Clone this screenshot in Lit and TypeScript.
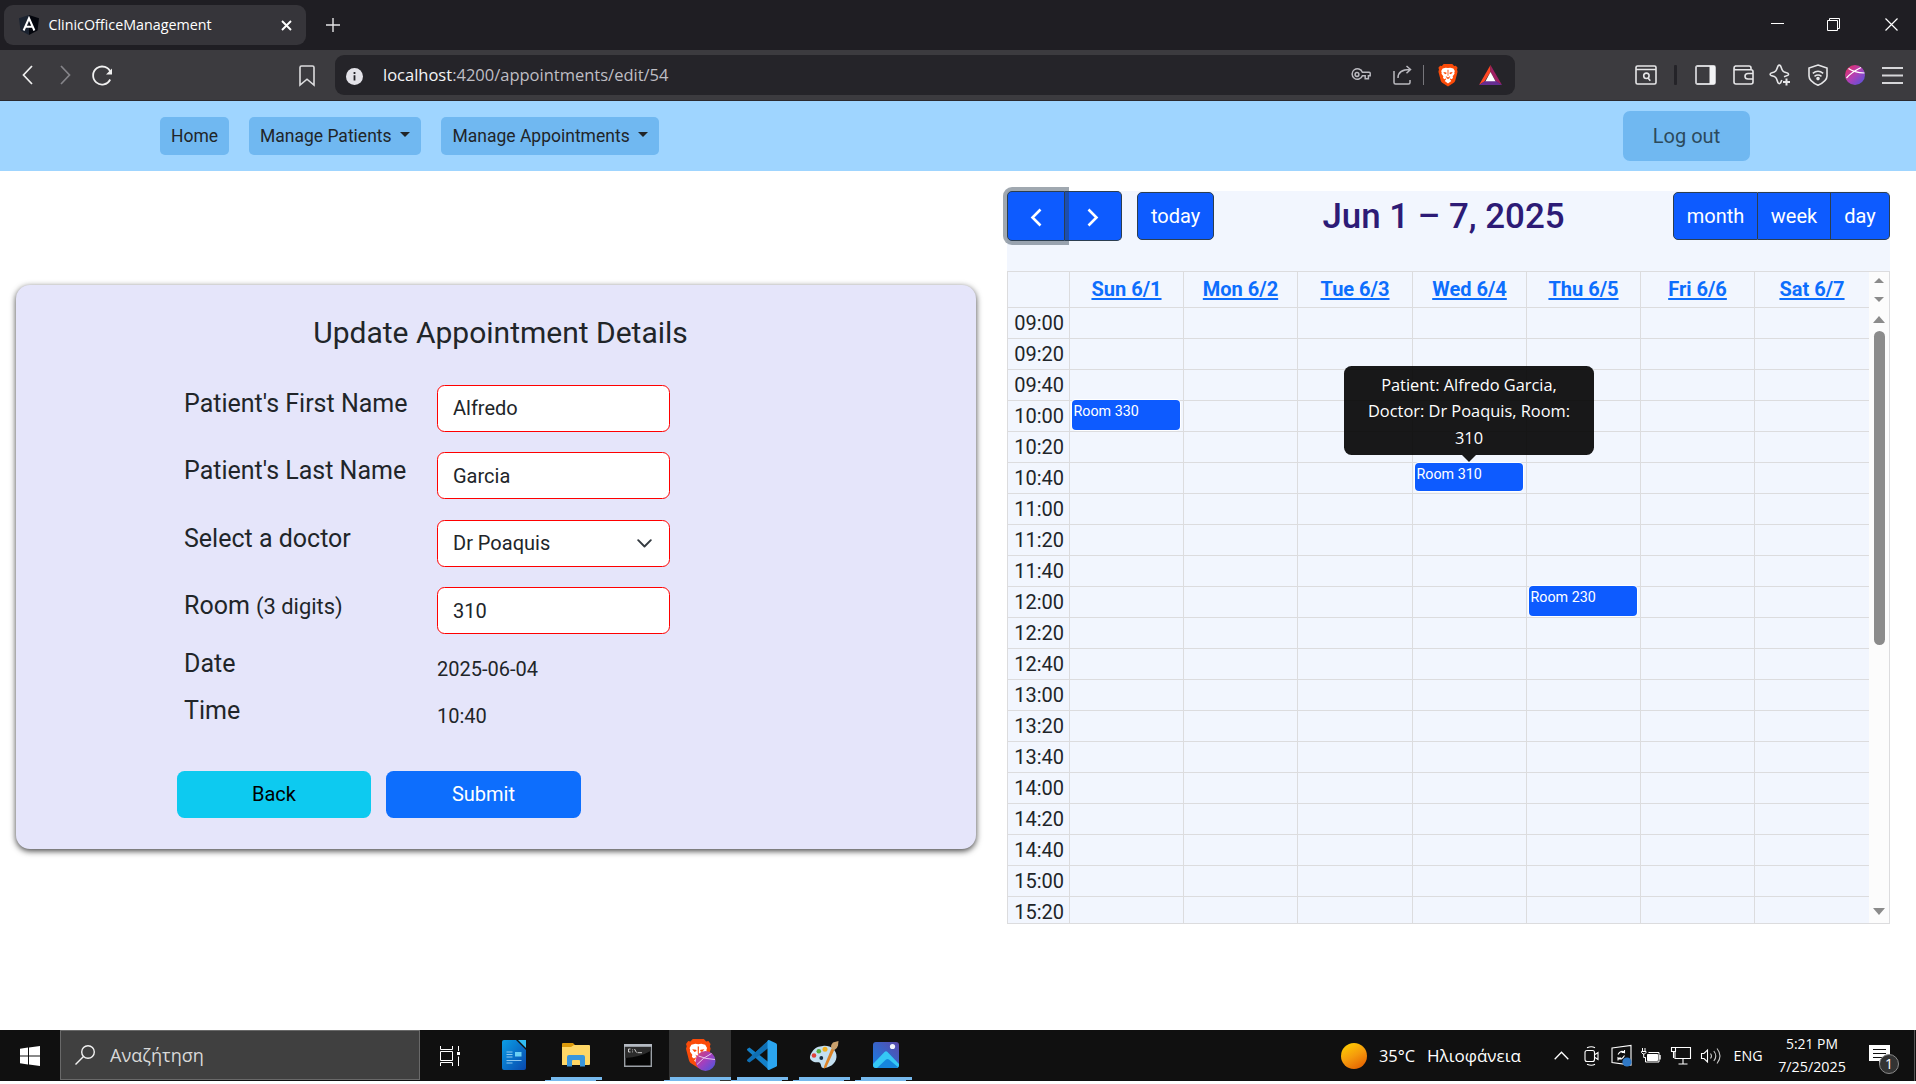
import { LitElement, html, css, svg } from "lit";
import { customElement } from "lit/decorators.js";
import { classMap } from "lit/directives/class-map.js";

const DAYS = ["Sun 6/1", "Mon 6/2", "Tue 6/3", "Wed 6/4", "Thu 6/5", "Fri 6/6", "Sat 6/7"];

const SLOTS = Array.from({ length: 20 }, (_, i) => {
  const minutes = 9 * 60 + i * 20;
  return `${String(Math.floor(minutes / 60)).padStart(2, "0")}:${String(minutes % 60).padStart(2, "0")}`;
});

interface Booking {
  day: number;
  slot: string;
  room: string;
  tip?: string;
}

const BOOKINGS: Booking[] = [
  { day: 0, slot: "10:00", room: "Room 330" },
  { day: 3, slot: "10:40", room: "Room 310", tip: "Patient: Alfredo Garcia, Doctor: Dr Poaquis, Room: 310" },
  { day: 4, slot: "12:00", room: "Room 230" },
];

const lion = svg`
  <path fill="#fb4b09" d="M5.5 0h9l1.9 2 1.8-.3 1.8 2.3-.6 1.8.6 2.2-2.4 9.2c-.4 1.3-1 2-2 2.7L10 23.6l-5.600-3.700c-1-.7-1.600-1.400-2-2.700L0 8l.6-2.200L0 4l1.800-2.300 1.800.3z"/>
  <path fill="#fff" d="M10 4.300l2.400-.5 3.200.9 1.500 2.600-.5 1.600.2 1.300-1.900 2.600.3 1.900-1.600 1.100-1.700-1 .3 1.500 1.200 1.400-3.400 2.700-3.400-2.700 1.200-1.400.3-1.500-1.700 1-1.600-1.100.3-1.900-1.900-2.600.2-1.300-.5-1.600 1.500-2.600 3.200-.9z"/>
  <path fill="#fb4b09" d="M5 8.300l3.200.5.400 1-1.700.8zM15 8.300l-3.200.5-.4 1 1.700.8zM9.500 6h1l-.1 6.200h-.8zM7.500 12.600l2.500 1.600 2.500-1.600-1.500 2.700H9z"/>`;

@customElement("browser-chrome")
class BrowserChrome extends LitElement {
  static styles = css`
    :host { display: block; font-family: "Open Sans", sans-serif; }
    svg { display: block; flex: none; overflow: visible; }
    .strip { display: flex; height: 45px; padding: 5px 0 0 4px; box-sizing: content-box; background: #1f1e23; color: #fff; }
    .tab { display: flex; align-items: center; width: 302px; height: 40px; padding-left: 15px; box-sizing: border-box; border-radius: 9px; background: #36353a; }
    .tab .name { margin-left: 9.500px; width: 232.500px; font-size: 14.3px; line-height: 20px; }
    .plus { margin: 13px 0 0 20px; }
    .window { display: flex; align-items: flex-start; gap: 44px; margin: 13px 18px 0 auto; }
    .bar { display: flex; align-items: center; height: 50px; border-bottom: 1px solid #2b2a2e; background: #3c3b3f; }
    .back { margin-left: 22px; }
    .fwd { margin-left: 27px; }
    .reload { margin-left: 21px; }
    .mark { margin-left: 186px; }
    .url { display: flex; align-items: center; width: 1180px; height: 40px; margin-left: 20px; padding: 0 4px 0 11px; box-sizing: border-box; border-radius: 9px; background: #252429; }
    .address { flex: 1; margin-left: 20px; font-size: 16.5px; line-height: 24px; color: #bfbec4; }
    .address b { font-weight: 400; color: #f4f4f6; }
    .cell { display: flex; justify-content: center; width: 42px; }
    .rule { width: 1px; height: 20px; margin: 0 3px 0 -1px; background: #77767b; }
    .tools { display: flex; align-items: center; margin-left: auto; padding-right: 5px; }
    .tool { display: flex; justify-content: center; width: 37.3px; }
    .sep { width: 3px; height: 20px; margin: 0 10px; border-radius: 1px; background: #242328; }
    .info { margin-top: 2px; }
  `;
  render() {
    return html`
      <div class="strip">
        <div class="tab">
          <svg width="20" height="20" viewBox="0 0 20 20"><path fill="#1b2330" d="M10 0L0 3.300l1.500 12.300L10 20z"/><path fill="#04060d" d="M10 0l10 3.300-1.500 12.300L10 20z"/><path fill="none" stroke="#fff" stroke-width="2" d="M4.600 15.500L10 3.300l5.400 12.200M6.600 11.800h6.800"/></svg>
          <span class="name">ClinicOfficeManagement</span>
          <svg width="11" height="11" viewBox="0 0 11 11"><path d="M1 1l9 9M10 1l-9 9" stroke="#fff" stroke-width="1.900"/></svg>
        </div>
        <svg class="plus" width="14" height="14" viewBox="0 0 14 14"><path d="M7 0v14M0 7h14" stroke="#e4e4e6" stroke-width="1.400"/></svg>
        <div class="window">
          <svg width="13" height="13" viewBox="0 0 13 13"><path d="M0 5.500h13" stroke="#fff"/></svg>
          <svg width="13" height="13" viewBox="0 0 13 13"><path d="M-.5 2.500h10v10h-10zM1.500 2.500v-2h10v10h-2" fill="none" stroke="#fff"/></svg>
          <svg width="13" height="13" viewBox="0 0 13 13"><path d="M.5.500l12 12M12.500.500l-12 12" stroke="#fff" stroke-width="1.200"/></svg>
        </div>
      </div>
      <div class="bar">
        <svg class="back" width="11" height="20" viewBox="0 0 11 20"><path d="M10 1L1.500 10 10 19" fill="none" stroke="#f0f0f0" stroke-width="1.700"/></svg>
        <svg class="fwd" width="11" height="20" viewBox="0 0 11 20"><path d="M1 1l8.500 9L1 19" fill="none" stroke="#858489" stroke-width="1.700"/></svg>
        <svg class="reload" width="21" height="20" viewBox="0 0 21 20"><path d="M18.600 7.500A9 9 0 1 0 18.200 14.500" fill="none" stroke="#f0f0f0" stroke-width="1.800"/><path d="M20 3.500v6h-6z" fill="#f0f0f0"/></svg>
        <svg class="mark" width="16" height="21" viewBox="0 0 16 21"><path d="M1 2.500Q1 1 2.500 1h11Q15 1 15 2.500V20l-7-5.800L1 20z" fill="none" stroke="#dcdcde" stroke-width="1.600"/></svg>
        <div class="url">
          <svg class="info" width="17" height="17" viewBox="0 0 17 17"><circle cx="8.500" cy="8.500" r="8.500" fill="#e3e2e8"/><path d="M8.500 7.300v5.200M8.500 4v1.900" stroke="#252429" stroke-width="1.800"/></svg>
          <span class="address"><b>localhost</b>:4200/appointments/edit/54</span>
          <div class="cell"><svg width="20" height="14" viewBox="0 0 20 14" fill="none" stroke="#bab9bf" stroke-width="1.500"><path d="M11.400 4.200h6.800q1 0 1 1v2.600h-1.800v3h-3.200v-3h-2.800A5.300 5.300 0 1 1 11.400 4.200z"/><circle cx="6" cy="6.500" r="1.900"/></svg></div>
          <div class="cell"><svg width="20" height="20" viewBox="0 0 20 20" fill="none" stroke="#bab9bf" stroke-width="1.500"><path d="M1 6v11.500q0 1.500 1.500 1.500h13q1.500 0 1.500-1.500V15M5 13c0-6 4-8.500 12-8.500M13.500 1l4 3.500-4 3.700"/></svg></div>
          <span class="rule"></span>
          <div class="cell"><svg width="20" height="23" viewBox="0 0 20 24">${lion}</svg></div>
          <div class="cell"><svg width="23" height="20" viewBox="0 0 23 20"><path fill="#ff4724" d="M11.500 0v7L5.500 16.500 0 20z"/><path fill="#9e1f63" d="M11.500 0L23 20l-6-3.500-5.500-9.500z"/><path fill="#662d91" d="M0 20l6-4h11l6 4z"/><path fill="#fff" d="M11.500 7l5 9.200h-10z"/></svg></div>
        </div>
        <div class="tools">
          <div class="tool"><svg width="22" height="20" viewBox="0 0 22 20" fill="none" stroke="#e6e6e8" stroke-width="1.600"><rect x="1" y="1" width="20" height="18" rx="1.500"/><path d="M1 4.500h20M13 13l2.300 2.800"/><circle cx="11.400" cy="10.800" r="2.700"/></svg></div>
          <span class="sep"></span>
          <div class="tool"><svg width="21" height="20" viewBox="0 0 21 20"><rect x="1" y="1" width="19" height="18" rx="1.500" fill="none" stroke="#d2d2d5" stroke-width="1.800"/><path d="M14.500 1h5.500v18h-5.500z" fill="#f3f3f5"/></svg></div>
          <div class="tool"><svg width="21" height="20" viewBox="0 0 21 20" fill="none" stroke="#e6e6e8" stroke-width="1.600"><path d="M1 3V17q0 2 2 2h15q2 0 2-2V6.500q0-1.800-2-1.800H2.500Q1 4.500 1 3t1.500-2H16q2 0 2 2v1.500M20 8.500h-5Q12 8.500 12 11.200t3 2.800h5"/></svg></div>
          <div class="tool"><svg width="22" height="22" viewBox="0 0 22 22" fill="none" stroke="#e6e6e8" stroke-width="1.600"><path d="M12.800 16L11.600 18.800q-1.300 1.600-2.600 0L7.600 15Q7 13.300 5.300 12.600L2 11.400q-1.800-1 0-2.300L5.300 8Q7 7.300 7.600 5.500L9 2q1.300-1.800 2.600 0L13 5.500q.6 1.800 2.300 2.500l3.400 1.100q1.700 1.300 0 2.300L15 12.800"/><path d="M17.500 14.500v7M14 18h7" stroke-width="2"/></svg></div>
          <div class="tool"><svg width="20" height="22" viewBox="0 0 20 22" fill="none" stroke="#e6e6e8" stroke-width="1.600"><path d="M10 1l9 3v8c0 4.500-4 7-9 9.200C5 19 1 16.500 1 12V4z"/><path d="M4.800 9.300q5.200-4 10.400 0M6.500 12.300q3.500-2.600 7 0"/><circle cx="10" cy="14.600" r="1" fill="#e6e6e8"/></svg></div>
          <div class="tool"><svg width="20" height="20" viewBox="0 0 20 20"><defs><linearGradient id="pg" x1="0" y1="0" x2="1" y2="1"><stop offset="0.100" stop-color="#e0306a"/><stop offset=".5" stop-color="#b040b8"/><stop offset="1" stop-color="#4a55e0"/></linearGradient></defs><circle cx="10" cy="10" r="10" fill="url(#pg)"/><path d="M3.500 3.500Q9 7.500 19.500 8M1.500 13Q6 7.500 16 2.500" fill="none" stroke="#fff" stroke-width="1.200"/></svg></div>
          <div class="tool"><svg width="21" height="17" viewBox="0 0 21 17"><path d="M0 1h21M0 8.500h21M0 16h21" stroke="#d6d6d9" stroke-width="1.800"/></svg></div>
        </div>
      </div>`;
  }
}

@customElement("site-nav")
class SiteNav extends LitElement {
  static styles = css`
    :host { display: flex; align-items: center; height: 70px; padding: 0 166px 0 160px; background: #9fd5ff; font-family: Roboto, sans-serif; color: #212529; }
    .item { display: flex; align-items: center; height: 38px; margin-right: 20px; padding: 0 11px; box-sizing: border-box; border-radius: 5px; background: #70b8f1; font-size: 17.500px; white-space: nowrap; }
    .caret { margin: -3px 0 0 8px; border: 5px solid transparent; border-top-color: #212529; border-bottom: 0; }
    .logout { width: 127px; height: 50px; margin-left: auto; border-radius: 7px; background: #70b8f1; font-size: 20px; line-height: 50px; text-align: center; color: #2c4a5c; }
    .item.short { width: 69px; }
    .item.mid { width: 172px; }
    .item.long { width: 218px; padding-left: 11.500px; }
  `;
  render() {
    return html`
      <div class="item short">Home</div>
      <div class="item mid">Manage Patients<span class="caret"></span></div>
      <div class="item long">Manage Appointments<span class="caret"></span></div>
      <div class="logout">Log out</div>`;
  }
}

@customElement("appointment-form")
class AppointmentForm extends LitElement {
  static styles = css`
    :host { display: block; width: 960px; height: 564px; box-sizing: border-box; padding-top: 30px; border-radius: 14px; background: #e5e5fa; box-shadow: 0 2px 6px rgba(0, 0, 0, .75); font-family: Roboto, sans-serif; color: #212529; }
    h2 { margin: 0 0 33.600px; padding-left: 9px; font-size: 30px; line-height: 36px; font-weight: 400; text-align: center; }
    .row { display: flex; height: 67.500px; padding-left: 168px; }
    .row.tight { height: 58px; }
    .row.plain { height: 47px; }
    .label { width: 253px; margin-top: 1.400px; font-size: 25px; line-height: 36px; white-space: nowrap; }
    .plain .label, .tight .label { margin-top: .9px; }
    .label small { font-size: 21.900px; }
    .field { display: flex; align-items: center; justify-content: space-between; width: 233px; height: 47px; padding: 0 17px 0 15px; box-sizing: border-box; border: 1px solid #f00; border-radius: 7.500px; background: #fff; font-size: 20px; line-height: 24px; }
    .value { margin-top: 5.800px; font-size: 20px; line-height: 36px; }
    .actions { display: flex; gap: 15px; margin-top: 32px; padding-left: 161px; }
    .btn { width: 194px; height: 47px; border-radius: 7.500px; font-size: 20px; line-height: 46px; text-align: center; color: #000; background: #0dcaf0; }
    .btn.primary { width: 195px; color: #fff; background: #0d6efd; }
  `;
  render() {
    return html`
      <h2>Update Appointment Details</h2>
      <div class="row"><div class="label">Patient's First Name</div><div class="field">Alfredo</div></div>
      <div class="row"><div class="label">Patient's Last Name</div><div class="field">Garcia</div></div>
      <div class="row"><div class="label">Select a doctor</div><div class="field">Dr Poaquis
        <svg width="15" height="9" viewBox="0 0 15 9"><path d="M1.200 1.200l6.300 6.300 6.300-6.300" fill="none" stroke="#343a40" stroke-width="1.900" stroke-linecap="round" stroke-linejoin="round"/></svg></div></div>
      <div class="row tight"><div class="label">Room <small>(3 digits)</small></div><div class="field">310</div></div>
      <div class="row plain"><div class="label">Date</div><div class="value">2025-06-04</div></div>
      <div class="row plain"><div class="label">Time</div><div class="value">10:40</div></div>
      <div class="actions"><div class="btn">Back</div><div class="btn primary">Submit</div></div>`;
  }
}

@customElement("week-calendar")
class WeekCalendar extends LitElement {
  static styles = css`
    :host { display: block; width: 883px; height: 733px; background: #f2f6fe; font-family: Roboto, sans-serif; font-size: 20px; color: #212529; }
    .toolbar { display: flex; align-items: flex-start; height: 80px; }
    .group { display: flex; height: 48px; margin-top: 1px; color: #fff; }
    .group div { box-sizing: border-box; border: 1px solid #2c3e50; border-left-width: 0; background: #0d5bff; line-height: 47px; text-align: center; }
    .group div:first-child { border-left-width: 1px; border-radius: 5px 0 0 5px; }
    .group div:last-child { border-radius: 0 5px 5px 0; }
    .group div:only-child { border-radius: 5px; }
    .group.nav { height: 50px; margin-top: 0; }
    .group.nav div { display: flex; align-items: center; justify-content: center; width: 57px; padding-top: 2px; }
    .group.nav .focus { position: relative; width: 58px; box-shadow: 0 0 0 4px rgba(44, 62, 80, .45); }
    .today { width: 77px; }
    .group.now { margin-left: 15px; }
    .title { flex: 1; margin: 6px 0 0; font-size: 34.900px; line-height: 40px; font-weight: 500; text-align: center; color: #2d1b76; }
    .month { width: 85px; }
    .week { width: 73px; }
    .day { width: 59px; }
    .table { display: flex; height: 653px; box-sizing: border-box; border: 1px solid #dcdcde; }
    .sheet { display: flex; flex-direction: column; width: 861px; overflow: hidden; }
    .line { display: grid; grid-template-columns: 61px 114px 114px 115px 114px 114px 114px minmax(0, 1fr); flex: none; height: 31px; }
    .line.head { height: 35px; }
    .line > div { box-sizing: border-box; border-top: 1px solid #dcdcde; border-left: 1px solid #dcdcde; }
    .line > .axis { border-left: 0; padding-right: 5px; line-height: 31px; text-align: right; }
    .line.head > div { border-top: 0; line-height: 35px; text-align: center; font-weight: 700; color: #0d6efd; text-decoration: underline; text-decoration-thickness: 2px; text-underline-offset: 2px; }
    .slot { position: relative; }
    .event { position: absolute; z-index: 1; top: -1px; left: 2px; right: 3px; height: 30px; box-sizing: border-box; padding: 3px 0 0 1.500px; border-radius: 4px; background: #0d5bff; box-shadow: 0 0 0 1px #fff; color: #fff; font-size: 14.300px; line-height: 17px; }
    .event.hinted { top: 0; height: 28px; }
    .tip { position: absolute; z-index: 2; top: -97px; left: -69px; width: 250px; height: 89px; box-sizing: border-box; padding: 5.600px 20px; border-radius: 7.500px; background: rgba(0, 0, 0, .9); color: #fff; font: 16.400px/26.500px "Open Sans", sans-serif; text-align: center; }
    .tip::after { content: ""; position: absolute; top: 100%; left: 118px; border: 7px solid transparent; border-top-color: rgba(0, 0, 0, .9); border-bottom: 0; }
    .scroll { display: flex; flex-direction: column; align-items: center; width: 20px; background: #fcfcfc; }
    .up, .down { flex: none; border: 5px solid transparent; }
    .up { margin-top: 6px; border-top: 0; border-bottom-color: #8b8b8b; }
    .down { margin-top: 14px; border-bottom: 0; border-top-color: #8b8b8b; }
    .up.big { margin-top: 14px; border-width: 0 6.500px 7px; }
    .down.big { margin: auto 0 8px; border-width: 7px 6.500px 0; }
    .thumb { flex: none; width: 11px; height: 314px; margin-top: 8px; border-radius: 6px; background: #8b8b8b; }
  `;
  private slotCell(time: string, day: number) {
    const b = BOOKINGS.find((x) => x.slot === time && x.day === day);
    return html`<div class="slot">${b ? html`<div class=${classMap({ event: true, hinted: !!b.tip })}>${b.room}</div>` : ""}${b?.tip ? html`<div class="tip">${b.tip}</div>` : ""}</div>`;
  }
  render() {
    const views = ["month", "week", "day"];
    return html`
      <div class="toolbar">
        <div class="group nav">
          <div class="focus"><svg width="12" height="19" viewBox="0 0 12 19"><path d="M10.500 1.500l-8 8 8 8" fill="none" stroke="#fff" stroke-width="2.600"/></svg></div>
          <div><svg width="12" height="19" viewBox="0 0 12 19"><path d="M1.500 1.500l8 8-8 8" fill="none" stroke="#fff" stroke-width="2.600"/></svg></div>
        </div>
        <div class="group now"><div class="today">today</div></div>
        <div class="title">Jun 1 – 7, 2025</div>
        <div class="group">${views.map((v) => html`<div class=${classMap({ [v]: true })}>${v}</div>`)}</div>
      </div>
      <div class="table">
        <div class="sheet">
          <div class="line head"><div class="axis"></div>${DAYS.map((d) => html`<div>${d}</div>`)}</div>
          ${SLOTS.map((t) => html`<div class="line"><div class="axis">${t}</div>${DAYS.map((_, i) => this.slotCell(t, i))}</div>`)}
        </div>
        <div class="scroll">
          <span class="up"></span><span class="down"></span>
          <span class="up big"></span><span class="thumb"></span><span class="down big"></span>
        </div>
      </div>`;
  }
}

@customElement("task-bar")
class TaskBar extends LitElement {
  static styles = css`
    :host { display: flex; height: 51px; background: #101010; color: #fff; font-family: "Open Sans", sans-serif; }
    svg { display: block; overflow: visible; }
    .start { display: flex; justify-content: center; align-items: center; width: 60px; }
    .search { display: flex; align-items: center; width: 360px; height: 50px; padding-left: 14px; box-sizing: border-box; border: 1px solid #696969; background: #404040; color: #d8d8d8; font-size: 18.100px; }
    .search span { margin-left: 15px; }
    .view { display: flex; align-items: center; width: 43px; padding-left: 20px; }
    .app { display: flex; flex-direction: column; align-items: center; justify-content: space-between; width: 62px; }
    .icon { display: flex; align-items: center; height: 47px; padding-top: 1px; box-sizing: border-box; margin-top: 1px; }
    .app.on { background: #343434; }
    .bars { width: 62px; height: 4px; margin-top: -1px; }
    .bars i { display: block; width: 51px; height: 3px; margin-left: 6px; background: #76b9ed; }
    .bars i + i { height: 1px; margin-left: 0; }
    .on .bars i { width: 61px; margin-left: 1px; }
    .on .bars i + i { width: 56px; margin-left: -5px; }
    .weather { display: flex; align-items: center; margin-left: auto; width: 205px; font-size: 16.400px; white-space: nowrap; }
    .sun { width: 26px; height: 26px; margin-right: 12px; border-radius: 50%; background: linear-gradient(150deg, #ffd000 5%, #f59a0c 50%, #e35c00 95%); }
    .deg { width: 48px; }
    .sky { font-size: 17.060px; }
    .tray { display: flex; align-items: center; justify-content: center; width: 30px; }
    .lang { width: 44px; font-size: 14.250px; line-height: 51px; text-align: center; }
    .clock { width: 84px; padding-top: 2px; font-size: 13.900px; line-height: 23px; text-align: center; }
    .clock .time { font-size: 13.900px; }
    .clock .date { font-size: 14.300px; }
    .note { position: relative; width: 61px; box-sizing: border-box; padding: 15px 0 0 15px; border-right: 1px solid #555; margin-right: 1px; }
    .count { position: absolute; top: 24px; left: 25px; width: 20px; height: 20px; box-sizing: border-box; border: 1px solid #8a8a8a; border-radius: 50%; background: #333; font-size: 14px; line-height: 18px; text-align: center; }
  `;
  private app(icon: unknown, open = false, active = false) {
    return html`<div class=${classMap({ app: true, on: active })}><div class="icon">${icon}</div>${open ? html`<div class="bars"><i></i><i></i></div>` : ""}</div>`;
  }
  render() {
    return html`
      <div class="start"><svg width="20" height="20" viewBox="0 0 20 20"><path fill="#fff" d="M0 2.800l8-1.200v7.900H0zM9 1.400L20 0v9.500H9zM0 10.500h8v7.900l-8-1.200zM9 10.500h11V20L9 18.500z"/></svg></div>
      <div class="search"><svg width="20" height="20" viewBox="0 0 20 20"><circle cx="13" cy="7" r="6.300" fill="none" stroke="#f2f2f2" stroke-width="1.400"/><path d="M8.500 11.500L.5 19.500" stroke="#f2f2f2" stroke-width="1.500"/></svg><span>Αναζήτηση</span></div>
      <div class="view"><svg width="20" height="20" viewBox="0 0 20 20" fill="none" stroke="#fff"><path d="M.5 0v3.500h12V0M.5 5.500h12v9H.5zM.5 20v-3.500h12V20M18.500 0v5M18.500 10.500V20"/><path d="M17 6h3v3h-3z" fill="#fff" stroke="none"/></svg></div>
      ${this.app(svg`<svg width="24" height="30" viewBox="0 0 24 30"><defs><linearGradient id="w" x1="0" y1="0" x2="1" y2="1"><stop offset="0" stop-color="#0b9ee6"/><stop offset="1" stop-color="#0848ad"/></linearGradient></defs><path d="M2 0h12l10 10v18q0 2-2 2H2q-2 0-2-2V2Q0 0 2 0z" fill="url(#w)"/><path d="M16 0h8v8z" fill="#32bdf2"/><path d="M4.500 12h6M4.500 14.500h6M4.500 17h6M4.500 20.500h15M4.500 23h6" stroke="#8cc8f0" stroke-width="1"/><path d="M13 12h6.500v4.500H13z" fill="#6bd0f5"/></svg>`)}
      ${this.app(svg`<svg width="28" height="24" viewBox="0 0 28 24"><path d="M0 1q0-1 1-1h10l3 3h12.500v5H0z" fill="#dc9a0b"/><path d="M0 4h9l3-2h15q1 0 1 1v18q0 1-1 1H0z" fill="#ffd766"/><path d="M5 23.500V14q0-2 2-2h14q2 0 2 2v9.500h-5V18q0-1-1-1h-6q-1 0-1 1v5.500z" fill="#3a96dc"/></svg>`, true)}
      ${this.app(svg`<svg width="28" height="23" viewBox="0 0 28 23"><path d="M.7.700h26.600v21.600H.7z" fill="#060606" stroke="#9ba0a6" stroke-width="1.400"/><path d="M1.400 14Q16 13 26.600 7V2H1.400z" fill="#2b2b2b"/><path d="M0 0h28v2.800H0z" fill="#b4bac2"/><path d="M6.500 5h-2v3h2M8.500 5.500v.8M8.500 7.500v.8M10.500 5l2 3.500M13.500 8.700h4.500" fill="none" stroke="#ddd" stroke-width=".9"/></svg>`)}
      ${this.app(svg`<svg width="29" height="32" viewBox="0 0 29 32"><g transform="scale(1.230)">${lion}</g><defs><linearGradient id="b" x1="0" y1="0" x2="1" y2="1"><stop offset="0" stop-color="#e0406a"/><stop offset=".5" stop-color="#a040c0"/><stop offset="1" stop-color="#4058e0"/></linearGradient></defs><circle cx="19.500" cy="22" r="10" fill="url(#b)"/><path d="M12.500 17Q19 20 29 20.500M11 25.500Q17 18.500 25.500 14.500" fill="none" stroke="#e8c8f0" stroke-width="1"/></svg>`, true, true)}
      ${this.app(svg`<svg width="30" height="30" viewBox="0 0 30 30"><path d="M22 0L8.600 12.200 2.500 7.600.4 8.700q-.8.900 0 1.700L22 30z" fill="#1480c8"/><path d="M22 0v8L2.500 22.500.4 21.300q-.8-.8 0-1.700z" fill="#0f6fb4"/><path d="M12.500 15L22 7.500v15z" fill="#101010"/><path d="M22 0l7 3.200q1 .5 1 1.600v20.400q0 1.100-1 1.600L22 30q-1.500 0-1.500-1V1q0-1 1.500-1z" fill="#2ba5f0"/></svg>`, true)}
      ${this.app(svg`<svg width="30" height="29" viewBox="0 0 30 29"><path d="M14 5C21 4 28 9 27.500 16S20 27 14.500 27c-3 0-2-3.500-3.500-5s-4 0-7-1.500S-.5 16 3 11 9.500 5.600 14 5z" fill="#c3dff0"/><circle cx="5" cy="14.500" r="2.300" fill="#e0413a"/><circle cx="9.800" cy="10.200" r="2.300" fill="#57ad3c"/><circle cx="16" cy="8.300" r="2.500" fill="#f2b021"/><circle cx="12.300" cy="17" r="1.900" fill="#152c40"/><path d="M22.500 7.500l2.800 1.500-8 17.500-2.600 1.200.5-2.800z" fill="#dc8428"/><path d="M22 7q0-4 2-5.500L29.500 0 29 4.500Q28 8 25.500 9z" fill="#c9a06c"/></svg>`, true)}
      ${this.app(svg`<svg width="26" height="26" viewBox="0 0 26 26"><defs><linearGradient id="p" x1="0" y1="1" x2="1" y2="0"><stop offset="0" stop-color="#1480e8"/><stop offset="1" stop-color="#5b48a8"/></linearGradient><clipPath id="pc"><rect width="26" height="26" rx="3"/></clipPath></defs><g clip-path="url(#pc)"><rect width="26" height="26" fill="url(#p)"/><path d="M0 22L11.500 10q1.500-1.500 3 0L26 22v4H0z" fill="#35c8f5"/><path d="M4 26l9-8.500q1.500-1.200 3 0L26 26z" fill="#1686dd"/></g><circle cx="19.500" cy="4.500" r="2.600" fill="#f3f4fc"/></svg>`, true)}
      <div class="weather"><span class="sun"></span><span class="deg">35°C</span><span class="sky">Ηλιοφάνεια</span></div>
      <div class="tray"><svg width="15" height="9" viewBox="0 0 15 9"><path d="M.7 8.300l6.800-7 6.800 7" fill="none" stroke="#fff" stroke-width="1.300"/></svg></div>
      <div class="tray"><svg width="15" height="20" viewBox="0 0 15 20" fill="none" stroke="#fff" stroke-width="1.100"><path d="M3 1.800q4.500-2 8 0M3 18.200q4.500 2 8 0M11 8.500l3-2v7l-3-2"/><rect x="1" y="4.500" width="9.500" height="11" rx="2"/></svg></div>
      <div class="tray"><svg width="21" height="21" viewBox="0 0 21 21" fill="none" stroke="#fff" stroke-width="1.100"><path d="M1 3L20 .5V20L1 17.500zM7 9.500q3-5 6.500-2V5M13.500 7.500h-3M13.500 10.500q-3 5.500-6.500 2.500v2.500M7 13h3"/><circle cx="16" cy="17" r="4.600" fill="#2f78c6" stroke="none"/></svg></div>
      <div class="tray"><svg width="20" height="16" viewBox="0 0 20 16" fill="none" stroke="#fff"><path d="M7.500 4.500h10.500v9.500H4.500V9.500"/><path d="M6.500 6.500h10v6h-10z" fill="#fff"/><path d="M19 7v4.500" stroke-width="1.400"/><path d="M1.500 0v3M4 0v3M.5 3.500h4.500v1L3.500 6H2L.5 4.500zM2.700 6v3.500h2"/></svg></div>
      <div class="tray"><svg width="20" height="19" viewBox="0 0 20 19" fill="none" stroke="#fff" stroke-width="1.100"><path d="M5 1.500h14.500v11H4V6M12 12.500v5M7.500 18h9M.5 1.500h4v4h-4zM2.500 5.500V12"/></svg></div>
      <div class="tray"><svg width="20" height="18" viewBox="0 0 20 18" fill="none" stroke="#fff" stroke-width="1.100"><path d="M.5 6.500h2.500L6.500 3v12L3 11.500H.5z"/><path d="M9.500 6.500q2 2.500 0 5M12.800 4q4 5 0 10M16 1.500q6 7.500 0 15" stroke="#c8c8c8"/></svg></div>
      <div class="lang">ENG</div>
      <div class="clock"><div class="time">5:21 PM</div><div class="date">7/25/2025</div></div>
      <div class="note"><svg width="21" height="20" viewBox="0 0 21 20"><path d="M0 0h21v16h-7l-4 4v-4H0z" fill="#fff"/><path d="M4 4.500h13M4 8.500h13M4 12.500h9" stroke="#101010" stroke-width="1.200"/></svg><span class="count">1</span></div>`;
  }
}

@customElement("app-root")
class AppRoot extends LitElement {
  static styles = css`
    :host { display: flex; flex-direction: column; width: 1916px; height: 1084px; overflow: hidden; background: #fff; }
    .content { display: flex; align-items: flex-start; flex: 1; }
    .form { padding: 114px 31px 0 16px; }
    .calendar { padding-top: 20px; }
    task-bar { margin-bottom: 3px; }
  `;
  render() {
    return html`
      <browser-chrome></browser-chrome>
      <site-nav></site-nav>
      <div class="content">
        <div class="form"><appointment-form></appointment-form></div>
        <div class="calendar"><week-calendar></week-calendar></div>
      </div>
      <task-bar></task-bar>`;
  }
}
